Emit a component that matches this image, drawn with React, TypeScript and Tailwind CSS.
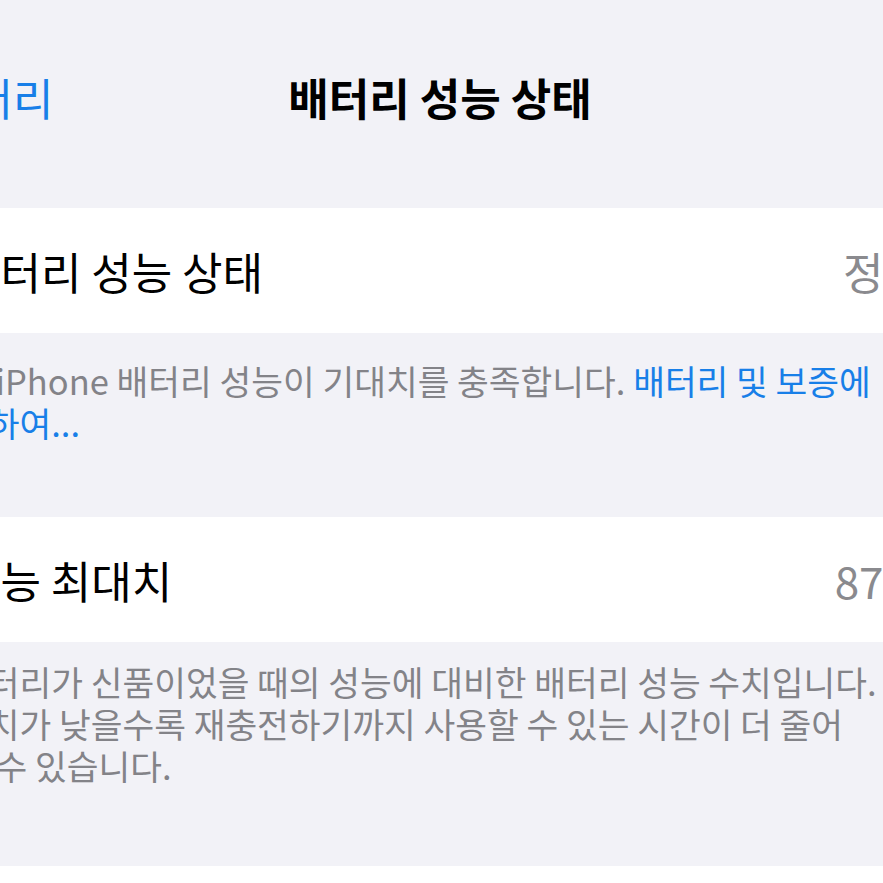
const font = { fontFamily: '"Noto Sans CJK KR", "Noto Sans", sans-serif' };

const Chevron = () => (
  <svg width="24" height="40" viewBox="0 0 24 40" fill="none">
    <path d="M20 3L4 20l16 17" stroke="#187fe8" strokeWidth="4.5" strokeLinecap="round" strokeLinejoin="round" />
  </svg>
);

type RowProps = { label: string; value: string };

const Row = ({ label, value }: RowProps) => (
  <div className="flex h-[125px] items-center justify-between bg-white pl-[80px] pr-[76px]">
    <span className="text-[44px] leading-none text-black whitespace-nowrap">{label}</span>
    <span className="text-[44px] leading-none text-[#8a8a8e] whitespace-nowrap">{value}</span>
  </div>
);

export default function App() {
  return (
    <div className="h-[883px] w-[883px] overflow-hidden bg-[#f2f2f7]" style={font}>
      <div className="-ml-[120px] w-[1120px]">
        <div className="pt-[49px] pb-[64px]">
          <div className="grid h-[95px] grid-cols-[1fr_auto_1fr] items-center px-[18px]">
            <div className="flex items-center gap-[10px]">
              <Chevron />
              <span className="text-[44px] leading-none text-[#187fe8] whitespace-nowrap">배터리</span>
            </div>
            <h1 className="text-[44px] font-bold leading-none text-black whitespace-nowrap">배터리 성능 상태</h1>
            <div />
          </div>
        </div>

        <Row label="배터리 성능 상태" value="정상" />

        <p className="px-[76px] pt-[26px] pb-[74px] text-[34.5px] leading-[42px] text-[#838388] whitespace-nowrap">
          이 iPhone 배터리 성능이 기대치를 충족합니다.{' '}
          <span className="text-[#187fe8]">배터리 및 보증에</span>
          <br />
          <span className="text-[#187fe8]">관하여...</span>
        </p>

        <Row label="성능 최대치" value="87%" />

        <p className="px-[76px] pt-[18px] pb-[80px] text-[34.5px] leading-[42px] text-[#838388] whitespace-nowrap">
          배터리가 신품이었을 때의 성능에 대비한 배터리 성능 수치입니다.
          <br />
          수치가 낮을수록 재충전하기까지 사용할 수 있는 시간이 더 줄어
          <br />
          들 수 있습니다.
        </p>

        <div className="h-[125px] bg-white" />
      </div>
    </div>
  );
}
